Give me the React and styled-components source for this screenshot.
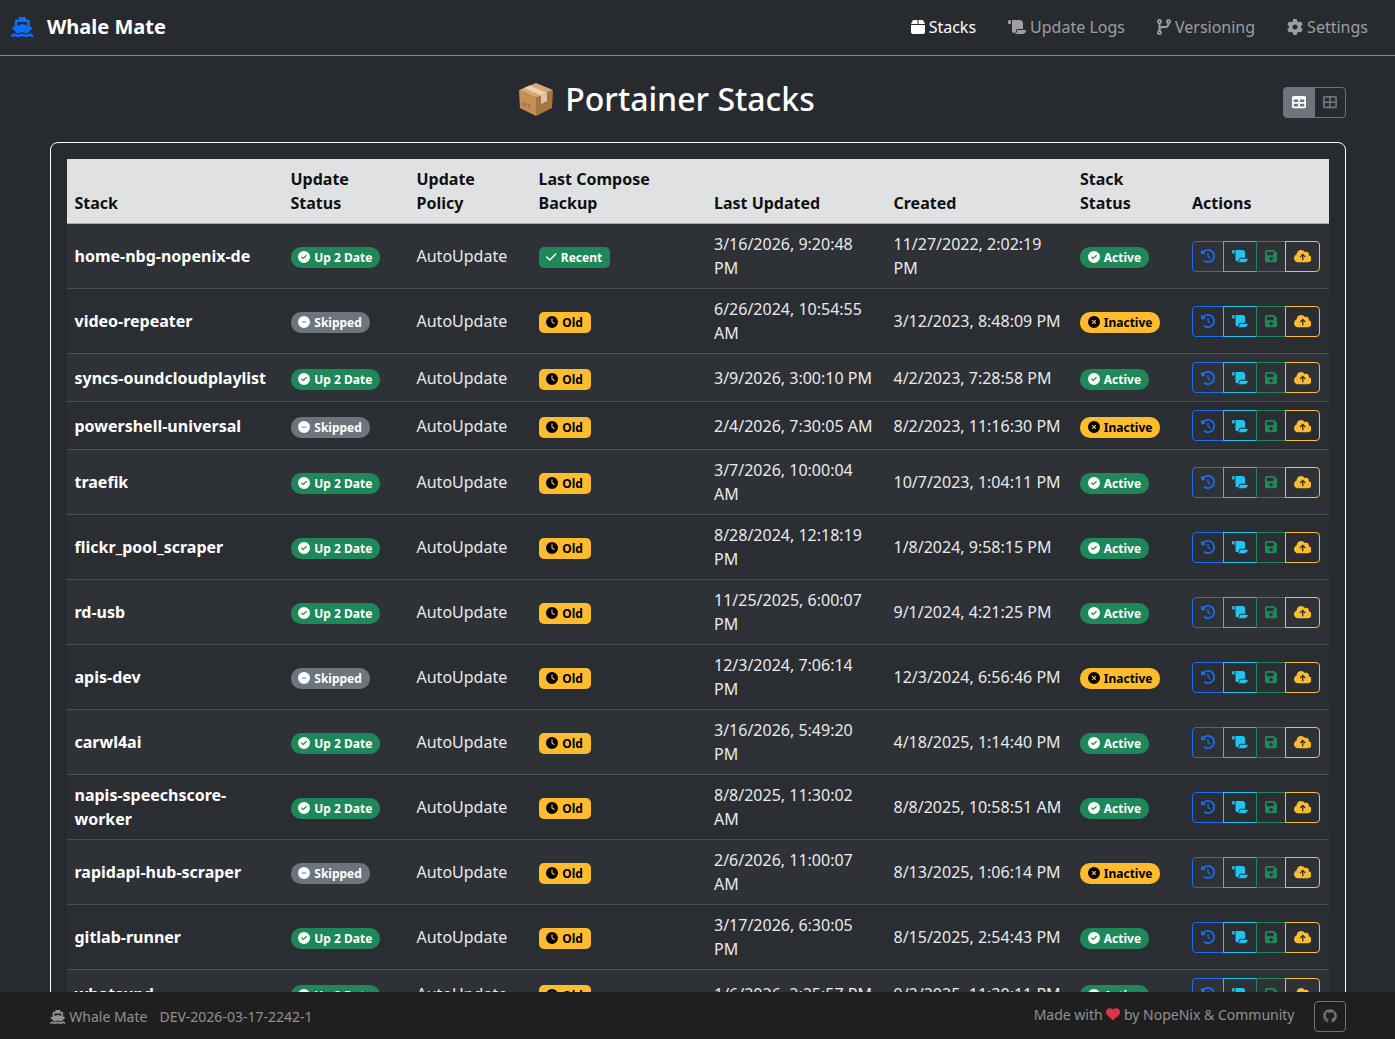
import React from "react";
import styled, { createGlobalStyle } from "styled-components";
import {
  FaShip, FaBox, FaScroll, FaCodeBranch, FaGear, FaClockRotateLeft, FaFloppyDisk,
  FaCloudArrowUp, FaCircleCheck, FaCircleMinus, FaCircleXmark, FaClock, FaCheck,
  FaHeart, FaGithub, FaTable, FaTableCellsLarge,
} from "react-icons/fa6";

const GlobalStyle = createGlobalStyle`
  html, body { margin: 0; height: 100%; overflow: hidden; }
  body {
    background: #272b2f;
    color: #fff;
    font-family: "Noto Sans", "Liberation Sans", sans-serif;
    font-size: 16px;
    line-height: 24px;
  }
  * { box-sizing: border-box; }
`;

// react-icons forces a 1em square, these keep the real glyph widths
const ShipIcon = styled(FaShip)`width: 1.125em;`;
const BoxIcon = styled(FaBox)`width: 0.875em;`;
const ScrollIcon = styled(FaScroll)`width: 1.125em;`;
const BranchIcon = styled(FaCodeBranch)`width: 0.875em;`;
const SaveIcon = styled(FaFloppyDisk)`width: 0.875em;`;
const CloudIcon = styled(FaCloudArrowUp)`width: 1.25em;`;
const CheckIcon = styled(FaCheck)`width: 0.875em;`;
const HeartIcon = styled(FaHeart)`color: #dc3545;`;

const rows = [
  ["home-nbg-nopenix-de", "up", "recent", "3/16/2026, 9:20:48 PM", "11/27/2022, 2:02:19 PM", "active"],
  ["video-repeater", "skip", "old", "6/26/2024, 10:54:55 AM", "3/12/2023, 8:48:09 PM", "inactive"],
  ["syncs-oundcloudplaylist", "up", "old", "3/9/2026, 3:00:10 PM", "4/2/2023, 7:28:58 PM", "active"],
  ["powershell-universal", "skip", "old", "2/4/2026, 7:30:05 AM", "8/2/2023, 11:16:30 PM", "inactive"],
  ["traefik", "up", "old", "3/7/2026, 10:00:04 AM", "10/7/2023, 1:04:11 PM", "active"],
  ["flickr_pool_scraper", "up", "old", "8/28/2024, 12:18:19 PM", "1/8/2024, 9:58:15 PM", "active"],
  ["rd-usb", "up", "old", "11/25/2025, 6:00:07 PM", "9/1/2024, 4:21:25 PM", "active"],
  ["apis-dev", "skip", "old", "12/3/2024, 7:06:14 PM", "12/3/2024, 6:56:46 PM", "inactive"],
  ["carwl4ai", "up", "old", "3/16/2026, 5:49:20 PM", "4/18/2025, 1:14:40 PM", "active"],
  ["napis-speechscore-worker", "up", "old", "8/8/2025, 11:30:02 AM", "8/8/2025, 10:58:51 AM", "active"],
  ["rapidapi-hub-scraper", "skip", "old", "2/6/2026, 11:00:07 AM", "8/13/2025, 1:06:14 PM", "inactive"],
  ["gitlab-runner", "up", "old", "3/17/2026, 6:30:05 PM", "8/15/2025, 2:54:43 PM", "active"],
  ["whatsupd", "up", "old", "1/6/2026, 2:25:57 PM", "9/2/2025, 11:30:11 PM", "active"],
];

const badges = {
  up: { label: "Up 2 Date", tone: "green", Icon: FaCircleCheck, pill: true },
  skip: { label: "Skipped", tone: "gray", Icon: FaCircleMinus, pill: true },
  recent: { label: "Recent", tone: "green", Icon: CheckIcon },
  old: { label: "Old", tone: "yellow", Icon: FaClock },
  active: { label: "Active", tone: "green", Icon: FaCircleCheck, pill: true },
  inactive: { label: "Inactive", tone: "yellow", Icon: FaCircleXmark, pill: true },
};

const tones = {
  green: "background:#1f8858;color:#fff;",
  gray: "background:#6c757d;color:#fff;",
  yellow: "background:#fdbc2e;color:#000;",
};

const widths = [216, 126, 122, 175.5, 179.5, 186.5, 112, 144.5];

function StatusBadge({ kind }) {
  const { label, tone, Icon, pill } = badges[kind];
  return (
    <Badge $tone={tone} $pill={pill}>
      <Icon />
      {label}
    </Badge>
  );
}

function ActionGroup() {
  return (
    <Group>
      <ActionBtn $color="#1a6cf0"><FaClockRotateLeft /></ActionBtn>
      <ActionBtn $color="#1fc4ef"><ScrollIcon /></ActionBtn>
      <ActionBtn $color="#1f8858"><SaveIcon /></ActionBtn>
      <ActionBtn $color="#fdbc2e"><CloudIcon /></ActionBtn>
    </Group>
  );
}

function BoxEmoji() {
  return (
    <EmojiSvg viewBox="0 0 38 38" aria-hidden="true">
      <path d="M19 3 36 10 19 18 2 10Z" fill="#d9a672" />
      <path d="M2 10 19 18V36L3 28Z" fill="#c68e57" />
      <path d="M36 10 19 18V36L35 28Z" fill="#a9753f" />
      <path d="M13 5.5 30 13 24 15.5 7 8Z" fill="#ecd3b2" />
      <path d="M24 15.5 30 13V21L24 24Z" fill="#d8c7b2" />
      <path d="M6 22v4M9 23v4M12 24v4" stroke="#8c6239" strokeWidth="1" />
    </EmojiSvg>
  );
}

export default function App() {
  return (
    <Page>
      <GlobalStyle />
      <Navbar>
        <Brand>
          <BrandIcon><ShipIcon /></BrandIcon>
          Whale Mate
        </Brand>
        <NavLinks>
          <NavLink $active><BoxIcon />Stacks</NavLink>
          <NavLink><ScrollIcon />Update Logs</NavLink>
          <NavLink><BranchIcon />Versioning</NavLink>
          <NavLink><FaGear />Settings</NavLink>
        </NavLinks>
      </Navbar>
      <Main>
        <TitleRow>
          <Title><BoxEmoji />Portainer Stacks</Title>
          <Toggle>
            <ToggleBtn $active><FaTable /></ToggleBtn>
            <ToggleBtn><FaTableCellsLarge /></ToggleBtn>
          </Toggle>
        </TitleRow>
        <Card>
          <Table>
            <colgroup>
              {widths.map((w, i) => <col key={i} style={{ width: w }} />)}
            </colgroup>
            <thead>
              <tr>
                <th>Stack</th>
                <th>Update Status</th>
                <th>Update Policy</th>
                <th>Last Compose Backup</th>
                <th>Last Updated</th>
                <th>Created</th>
                <th>Stack Status</th>
                <th>Actions</th>
              </tr>
            </thead>
            <tbody>
              {rows.map((r) => (
                <tr key={r[0]}>
                  <NameCell>{r[0]}</NameCell>
                  <td><StatusBadge kind={r[1]} /></td>
                  <td>AutoUpdate</td>
                  <td><StatusBadge kind={r[2]} /></td>
                  <td>{r[3]}</td>
                  <td>{r[4]}</td>
                  <td><StatusBadge kind={r[5]} /></td>
                  <td><ActionGroup /></td>
                </tr>
              ))}
            </tbody>
          </Table>
        </Card>
      </Main>
      <Footer>
        <FooterLeft>
          <FooterBrand><ShipIcon />Whale Mate</FooterBrand>
          <span>DEV-2026-03-17-2242-1</span>
        </FooterLeft>
        <FooterRight>
          <MadeWith>Made with <HeartIcon /> by NopeNix &amp; Community</MadeWith>
          <GitBtn><FaGithub /></GitBtn>
        </FooterRight>
      </Footer>
    </Page>
  );
}

const Page = styled.div`
  height: 100vh;
  display: flex;
  flex-direction: column;
  overflow: hidden;
`;

const Navbar = styled.nav`
  flex: none;
  height: 56px;
  display: flex;
  align-items: center;
  justify-content: space-between;
  padding: 0 11px 1px;
  border-bottom: 1px solid #8a8d90;
`;

const Brand = styled.div`
  display: flex;
  align-items: center;
  gap: 13.5px;
  font-size: 20px;
  font-weight: 700;
`;

const BrandIcon = styled.span`
  display: flex;
  color: #0d6efd;
  font-size: 20px;
`;

const NavLinks = styled.div`
  display: flex;
  align-items: center;
`;

const NavLink = styled.a`
  display: flex;
  align-items: center;
  gap: 4px;
  padding: 8px 16px;
  color: ${(p) => (p.$active ? "#fff" : "rgba(255,255,255,.55)")};
`;

const Main = styled.main`
  flex: 1;
  min-height: 0;
  overflow: hidden;
  padding: 0 49.5px;
`;

const TitleRow = styled.div`
  height: 86px;
  display: flex;
  align-items: center;
`;

const Title = styled.h1`
  flex: 1;
  margin: 0;
  display: flex;
  align-items: center;
  justify-content: center;
  gap: 10px;
  font-size: 32px;
  line-height: 38px;
  font-weight: 500;
`;

const EmojiSvg = styled.svg`
  width: 38px;
  height: 38px;
`;

const Toggle = styled.div`
  display: flex;
  margin-top: 6px;
  height: 31px;
`;

const ToggleBtn = styled.span`
  display: flex;
  align-items: center;
  justify-content: center;
  width: 32px;
  font-size: 14px;
  color: ${(p) => (p.$active ? "#fff" : "#6c757d")};
  background: ${(p) => (p.$active ? "#6c757d" : "transparent")};
  border: 1px solid #6c757d;
  &:first-child { border-radius: 4px 0 0 4px; }
  &:last-child { border-radius: 0 4px 4px 0; margin-left: -1px; }
`;

const Card = styled.section`
  border: 1px solid #fff;
  border-radius: 8px;
  padding: 16px;
`;

const Table = styled.table`
  width: 100%;
  table-layout: fixed;
  border-collapse: collapse;

  th {
    background: #e0e1e3;
    color: #111;
    font-weight: 700;
    text-align: left;
    vertical-align: bottom;
    padding: 8px;
    border-bottom: 1px solid #a7a8aa;
  }

  td {
    padding: 8px;
    vertical-align: middle;
    color: #e9eaeb;
    border-bottom: 1px solid #4a4d51;
  }

  tbody tr:nth-child(odd) td { background: #2e3136; }
  tbody tr:nth-child(even) td { background: #2a2d32; }
`;

const NameCell = styled.td`
  && { font-weight: 700; color: #fff; }
`;

const Badge = styled.span`
  display: inline-block;
  padding: 0.35em 0.65em;
  font-size: 12px;
  line-height: 1;
  font-weight: 700;
  white-space: nowrap;
  border-radius: ${(p) => (p.$pill ? "10px" : "5px")};
  ${(p) => tones[p.$tone]}
  svg { margin-right: 4px; vertical-align: -0.125em; }
`;

const Group = styled.div`
  display: inline-flex;
  vertical-align: middle;
  margin-left: -0.25px;
`;

const ActionBtn = styled.span`
  display: flex;
  align-items: center;
  justify-content: center;
  height: 31px;
  padding: 0 8px;
  font-size: 14px;
  color: ${(p) => p.$color};
  border: 1px solid ${(p) => p.$color};
  margin-left: -1px;
  &:first-child { margin-left: 0; border-radius: 4px 0 0 4px; }
  &:last-child { border-radius: 0 4px 4px 0; }
`;

const Footer = styled.footer`
  flex: none;
  height: 47px;
  display: flex;
  align-items: center;
  justify-content: space-between;
  padding: 1px 49.5px 0;
  background: #1f1f1f;
  font-size: 14px;
  color: #8f9194;
`;

const FooterLeft = styled.div`
  display: flex;
  align-items: center;
  gap: 12px;
  padding-top: 1px;
`;

const FooterBrand = styled.span`
  display: flex;
  align-items: center;
  gap: 4px;
`;

const FooterRight = styled.div`
  display: flex;
  align-items: center;
  gap: 19px;
`;

const MadeWith = styled.span`
  margin-top: -3px;
  svg { vertical-align: -0.125em; }
`;

const GitBtn = styled.span`
  display: flex;
  align-items: center;
  justify-content: center;
  width: 32px;
  height: 31px;
  border: 1px solid #6c757d;
  border-radius: 4px;
  color: #6c757d;
  font-size: 14px;
`;
